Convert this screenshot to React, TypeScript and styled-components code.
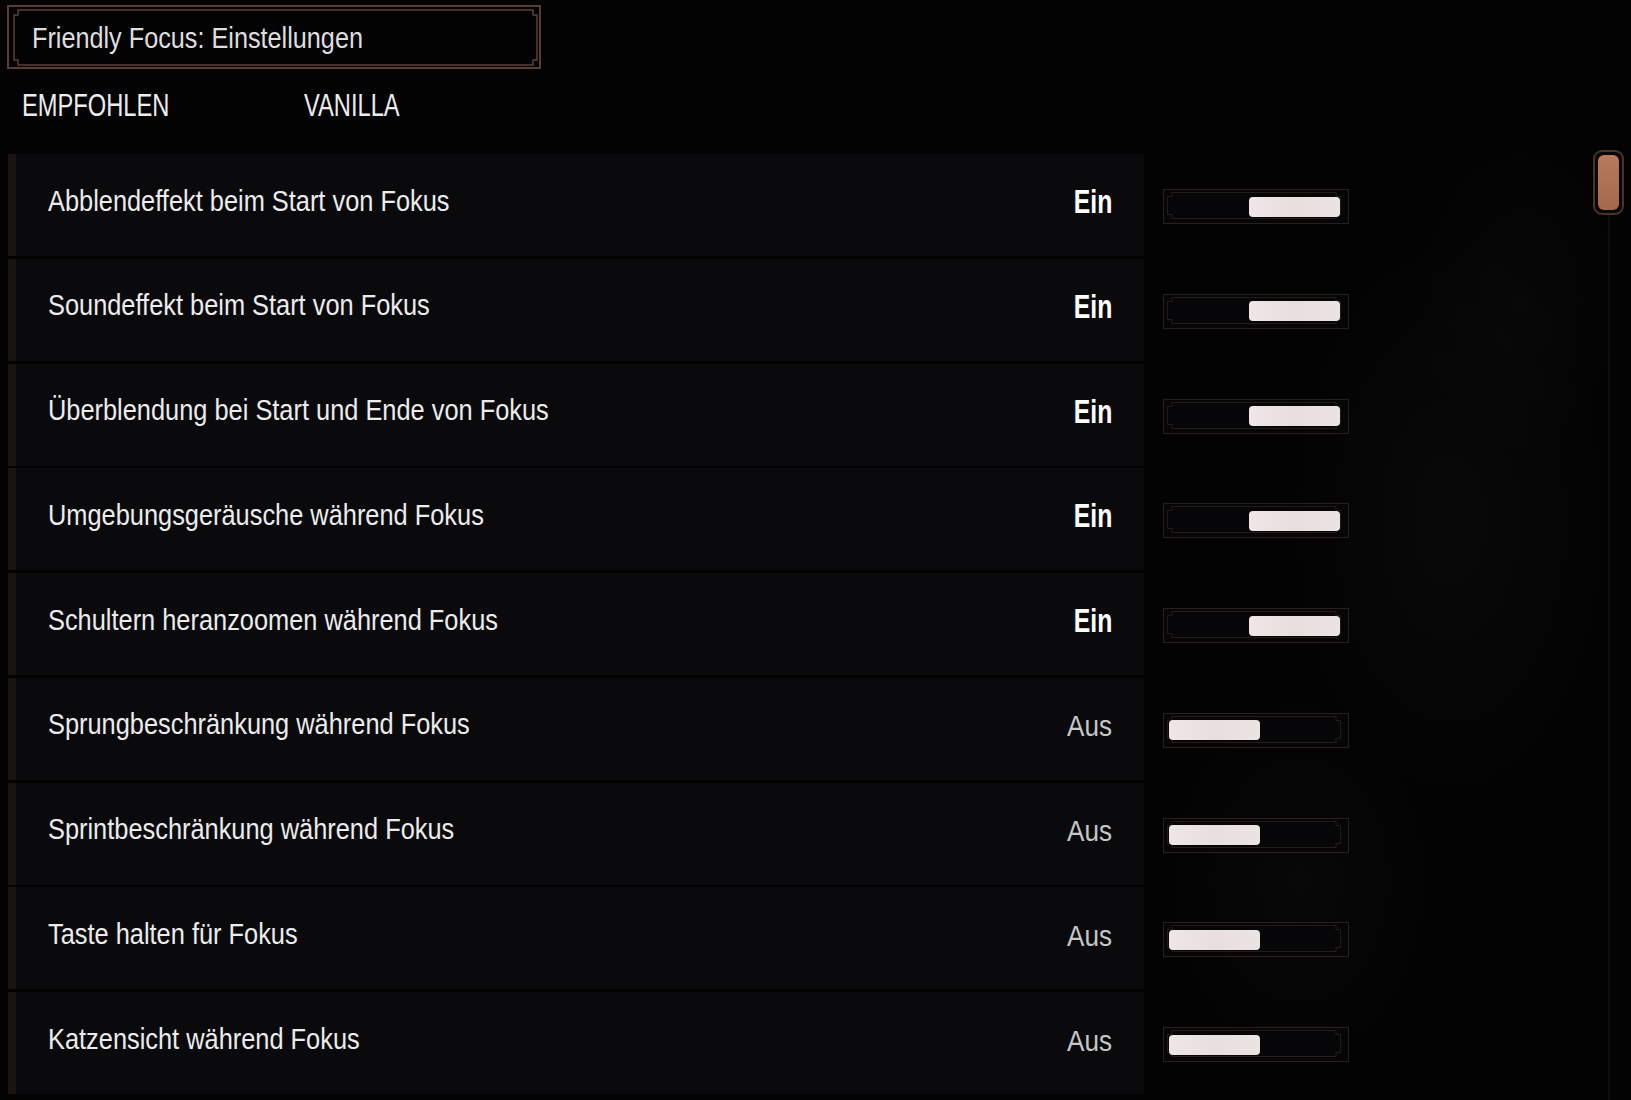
import { FC } from "react";
import styled, { createGlobalStyle } from "styled-components";

type Setting = {
    label: string;
    on: boolean;
};

const settings: Setting[] = [
    { label: "Abblendeffekt beim Start von Fokus", on: true },
    { label: "Soundeffekt beim Start von Fokus", on: true },
    { label: "Überblendung bei Start und Ende von Fokus", on: true },
    { label: "Umgebungsgeräusche während Fokus", on: true },
    { label: "Schultern heranzoomen während Fokus", on: true },
    { label: "Sprungbeschränkung während Fokus", on: false },
    { label: "Sprintbeschränkung während Fokus", on: false },
    { label: "Taste halten für Fokus", on: false },
    { label: "Katzensicht während Fokus", on: false }
];

// the game font is a narrow one; Liberation Sans gets squeezed to its width
const GlobalStyle = createGlobalStyle`
    html, body {
        margin: 0;
        padding: 0;
        background: #030304;
    }

    body {
        font-family: "Liberation Sans", Arial, sans-serif;
        color: #e4e4e4;
        overflow: hidden;
    }
`;

const TitleFrame: FC = () => (
    <FrameSvg width="534" height="64" viewBox="0 0 534 64">
        <path d="M10 4 H525 V9 H529 V54 H525 V59 H10 V54 H6 V9 H10 Z" fill="none" stroke="#5e4034" strokeWidth="1.5" />
    </FrameSvg>
);

const ToggleFrame: FC = () => (
    <FrameSvg width="184" height="33" viewBox="0 0 184 33">
        <path d="M9 3.5 H173 V7.5 H177.5 V25.5 H173 V29.5 H9 V25.5 H4.5 V7.5 H9 Z" fill="none" stroke="#261c17" strokeWidth="1" />
    </FrameSvg>
);

const Toggle: FC<{ on: boolean }> = ({ on }) => (
    <ToggleBox $on={on}>
        <ToggleFrame />
        <Knob />
    </ToggleBox>
);

export default function App() {
    return (
        <Page>
            <GlobalStyle />
            <Main>
                <TitleBox>
                    <TitleFrame />
                    <Title>Friendly Focus: Einstellungen</Title>
                </TitleBox>
                <Tabs>
                    <Tab>EMPFOHLEN</Tab>
                    <Tab>VANILLA</Tab>
                </Tabs>
                <List>
                    {settings.map((setting) => (
                        <Row key={setting.label}>
                            <Card>
                                <Label>{setting.label}</Label>
                                <Value $on={setting.on}>{setting.on ? "Ein" : "Aus"}</Value>
                            </Card>
                            <Toggle on={setting.on} />
                        </Row>
                    ))}
                </List>
            </Main>
            <ScrollColumn>
                <ScrollThumb>
                    <ScrollGrip />
                </ScrollThumb>
                <ScrollTrack />
            </ScrollColumn>
        </Page>
    );
}

const Page = styled.div`
    display: flex;
    width: 1631px;
    height: 1100px;
    overflow: hidden;
    background:
        radial-gradient(ellipse 240px 420px at 1450px 520px, rgba(255, 255, 255, 0.022), transparent 70%),
        radial-gradient(ellipse 200px 280px at 1300px 880px, rgba(255, 255, 255, 0.018), transparent 70%),
        radial-gradient(ellipse 160px 240px at 1520px 300px, rgba(255, 255, 255, 0.015), transparent 70%),
        #030304;
`;

const Main = styled.div`
    flex: 1;
    display: flex;
    flex-direction: column;
    padding-top: 5px;
`;

const TitleBox = styled.div`
    position: relative;
    box-sizing: border-box;
    width: 534px;
    height: 64px;
    margin-left: 7px;
    border: 2px solid #5a3c30;
    display: flex;
    align-items: center;
    padding-left: 23px;
`;

const FrameSvg = styled.svg`
    position: absolute;
    top: -1px;
    left: -1px;
    pointer-events: none;
`;

const Title = styled.span`
    display: inline-block;
    font-size: 29px;
    color: #dedede;
    margin-top: 2px;
    transform: scaleX(0.87);
    transform-origin: left center;
`;

const Tabs = styled.div`
    display: grid;
    grid-template-columns: 282px auto;
    margin-top: 20px;
    padding-left: 22px;
    height: 32px;
`;

const Tab = styled.span`
    display: inline-block;
    justify-self: start;
    font-size: 32px;
    line-height: 32px;
    color: #ececec;
    transform: scaleX(0.74);
    transform-origin: left center;
`;

const List = styled.div`
    display: grid;
    grid-auto-rows: 102px;
    row-gap: 2.75px;
    margin-top: 33px;
    padding-left: 8px;
`;

const Row = styled.div`
    display: flex;
    align-items: center;
`;

const Card = styled.div`
    box-sizing: border-box;
    width: 1136px;
    height: 100%;
    display: flex;
    align-items: center;
    justify-content: space-between;
    padding: 0 32px 8px 32px;
    border-left: 8px solid #1a1411;
    background: #0a0a0d;
`;

const Label = styled.span`
    display: inline-block;
    font-size: 29px;
    color: #ececec;
    transform: scaleX(0.875);
    transform-origin: left center;
`;

const Value = styled.span<{ $on: boolean }>`
    display: inline-block;
    font-size: ${(p) => (p.$on ? "33px" : "29px")};
    font-weight: ${(p) => (p.$on ? 700 : 400)};
    color: ${(p) => (p.$on ? "#ffffff" : "#c6c6c6")};
    transform: scaleX(${(p) => (p.$on ? 0.75 : 0.9)});
    transform-origin: right center;
    margin-top: ${(p) => (p.$on ? "2px" : "4px")};
`;

const ToggleBox = styled.div<{ $on: boolean }>`
    position: relative;
    box-sizing: border-box;
    width: 186px;
    height: 35px;
    margin: 3px 0 0 19px;
    border: 1px solid #2b1f1a;
    background: #060608;
    display: flex;
    align-items: center;
    justify-content: ${(p) => (p.$on ? "flex-end" : "flex-start")};
    padding: 0 8px 0 5px;
`;

const Knob = styled.div`
    position: relative;
    width: 91px;
    height: 20px;
    border-radius: 4px;
    background: linear-gradient(90deg, #efe6e6, #e8dede 50%, #ece3e3);
`;

const ScrollColumn = styled.div`
    width: 31px;
    margin-right: 7px;
    padding-top: 150px;
    display: flex;
    flex-direction: column;
    align-items: center;
`;

const ScrollThumb = styled.div`
    box-sizing: border-box;
    width: 31px;
    height: 65px;
    padding: 3px;
    border: 2px solid #4a3327;
    border-radius: 9px;
    background: #0a0706;
    display: flex;
`;

const ScrollGrip = styled.div`
    flex: 1;
    border-radius: 6px;
    background: linear-gradient(180deg, #b77a5b, #a4684c);
`;

const ScrollTrack = styled.div`
    flex: 1;
    width: 2px;
    background: #0d0d10;
`;
